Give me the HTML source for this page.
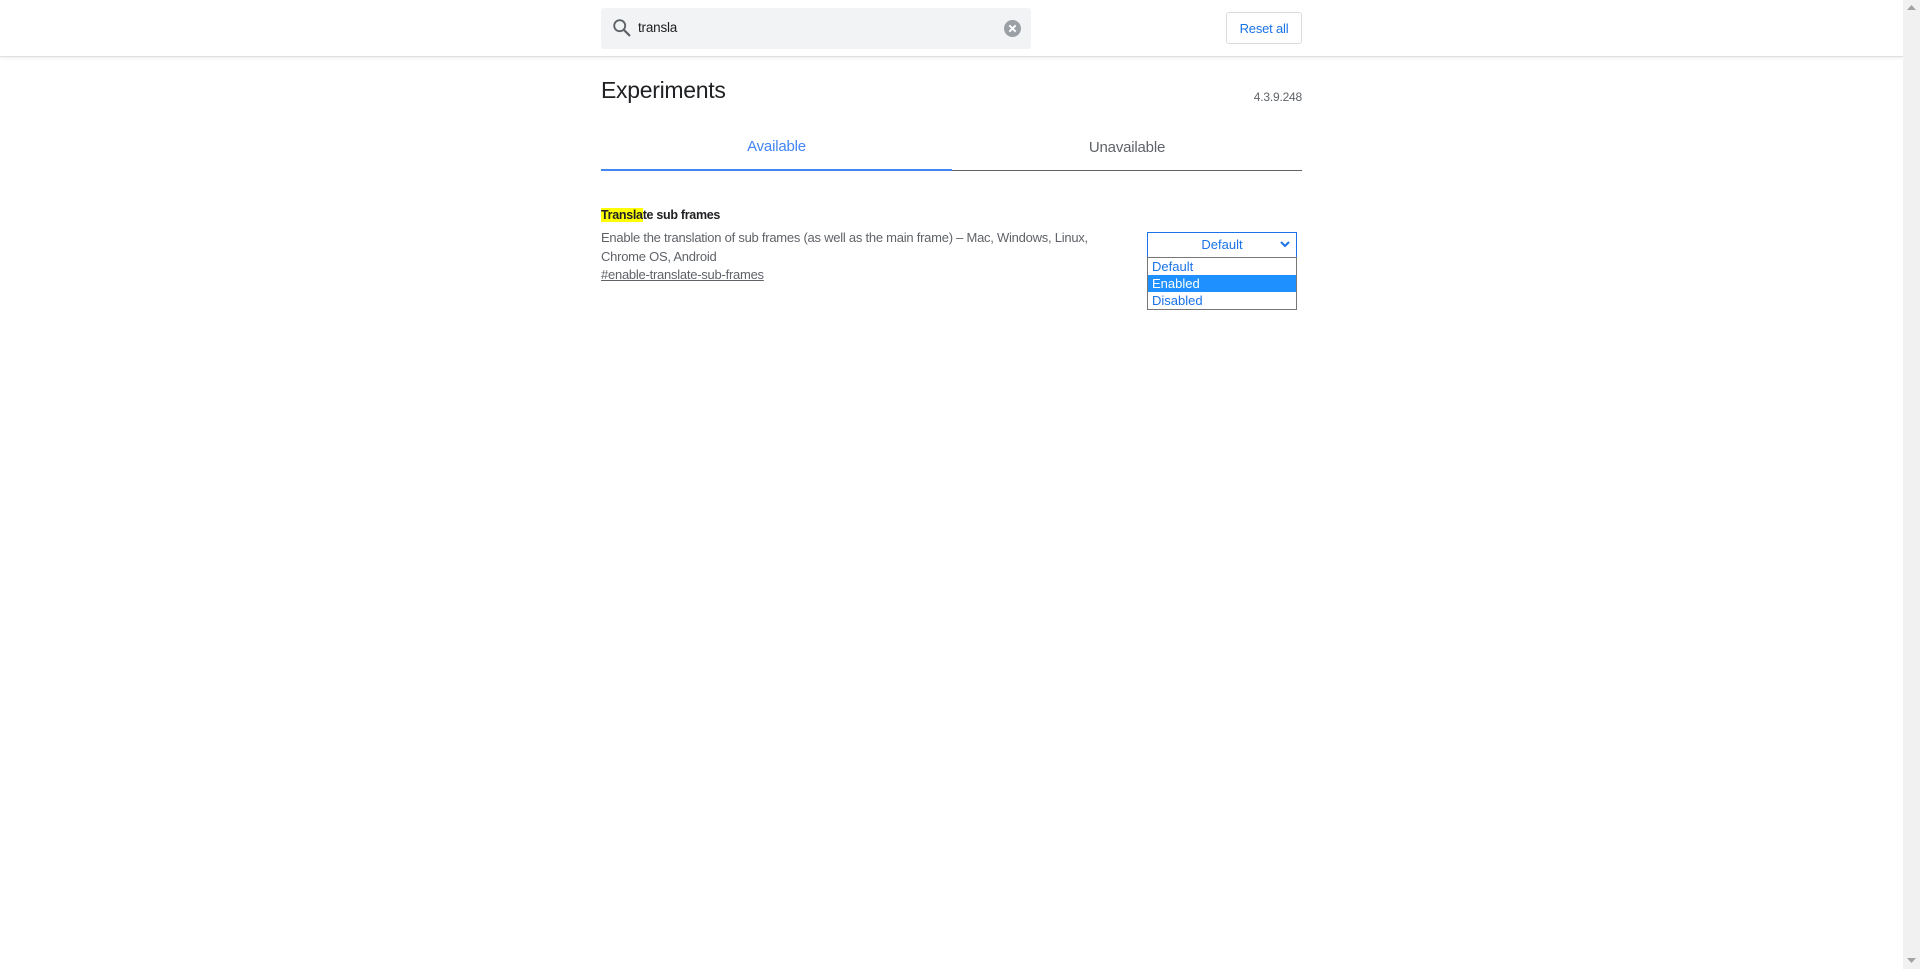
<!DOCTYPE html>
<html><head><meta charset="utf-8"><style>
*{margin:0;padding:0;box-sizing:border-box}
body{width:1920px;height:969px;overflow:hidden;background:#fff;font-family:"Liberation Sans",sans-serif;position:relative}
.a{position:absolute}
#hdr{left:0;top:0;width:1903px;height:57px;background:#fff;border-bottom:1px solid #e0e0e0;box-shadow:0 1px 3px rgba(0,0,0,.08)}
#sb{left:1903px;top:0;width:17px;height:969px;background:#f1f1f1}
</style></head><body>
<div id="hdr" class="a">
  <div class="a" style="left:601px;top:8px;width:430px;height:41px;background:#f1f3f4;border-radius:3px"></div>
  <svg class="a" style="left:611px;top:17px" width="22" height="22" viewBox="0 0 24 24"><circle cx="9.5" cy="9.5" r="6" fill="none" stroke="#5f6368" stroke-width="2"/><path d="M14 14l6 6" stroke="#5f6368" stroke-width="2.4" stroke-linecap="round"/></svg>
  <div class="a" style="left:638px;top:20px;font-size:13.5px;color:#202124;letter-spacing:-0.2px">transla</div>
  <svg class="a" style="left:1004px;top:20px" width="17" height="17" viewBox="0 0 16 16"><circle cx="8" cy="8" r="8" fill="#9aa0a6"/><path d="M5 5l6 6M11 5l-6 6" stroke="#fff" stroke-width="1.8"/></svg>
  <div class="a" style="left:1226px;top:12px;width:76px;height:32px;border:1px solid #dadce0;border-radius:3px;color:#1a73e8;font-size:13px;text-align:center;line-height:31px;letter-spacing:-0.2px">Reset all</div>
</div>
<div class="a" style="left:601px;top:77px;font-size:23px;color:#202124;letter-spacing:-0.3px">Experiments</div>
<div class="a" style="left:1202px;width:100px;text-align:right;top:90px;font-size:12px;color:#5f6368;letter-spacing:-0.2px">4.3.9.248</div>
<div class="a" style="left:601px;top:138px;width:351px;text-align:center;font-size:15px;color:#4285f4;letter-spacing:-0.2px">Available</div>
<div class="a" style="left:952px;top:139px;width:350px;text-align:center;font-size:15px;color:#5f6368;letter-spacing:-0.2px">Unavailable</div>
<div class="a" style="left:601px;top:169px;width:351px;height:2px;background:#4285f4"></div>
<div class="a" style="left:952px;top:170px;width:350px;height:1px;background:#5f6368"></div>
<div class="a" style="left:601px;top:208px;font-size:12.5px;font-weight:bold;color:#202124;letter-spacing:-0.3px"><span style="background:#ff0">Transla</span>te sub frames</div>
<div class="a" style="left:601px;top:228px;width:510px;font-size:13px;line-height:19px;color:#5f6368;letter-spacing:-0.25px">Enable the translation of sub frames (as well as the main frame) – Mac, Windows, Linux, Chrome OS, Android</div>
<div class="a" style="left:601px;top:267px;font-size:13px;color:#5f6368;text-decoration:underline;letter-spacing:-0.25px">#enable-translate-sub-frames</div>
<div class="a" style="left:1147px;top:232px;width:150px;height:26px;border:1px solid #1a73e8;font-size:13px;color:#1a73e8;text-align:center;line-height:24px">Default</div>
<svg class="a" style="left:1280px;top:240px" width="10" height="8" viewBox="0 0 10 8"><path d="M1 2l4 4 4-4" fill="none" stroke="#1a73e8" stroke-width="2"/></svg>
<div class="a" style="left:1147px;top:257px;width:150px;height:53px;border:1px solid #767676;background:#fff;font-size:13px;color:#1a73e8">
  <div style="height:17px;line-height:17px;padding-left:4px">Default</div>
  <div style="height:17px;line-height:17px;padding-left:4px;background:#1e90ff;color:#fff">Enabled</div>
  <div style="height:17px;line-height:17px;padding-left:4px">Disabled</div>
</div>
<div id="sb" class="a">
  <svg class="a" style="left:4px;top:4px" width="9" height="6" viewBox="0 0 9 6"><path d="M0 6L4.5 1 9 6z" fill="#a3a3a3"/></svg>
  <svg class="a" style="left:4px;top:958px" width="9" height="6" viewBox="0 0 9 6"><path d="M0 0L4.5 5 9 0z" fill="#a3a3a3"/></svg>
</div>
</body></html>
